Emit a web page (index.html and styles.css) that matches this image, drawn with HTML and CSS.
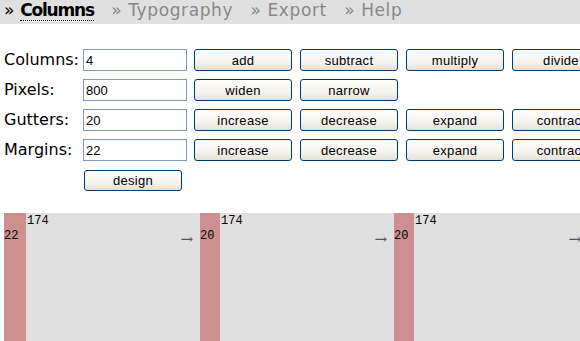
FILE: index.html
```html
<!DOCTYPE html>
<html lang="en">
<head>
  <meta charset="UTF-8">
  <title>Grid Designer</title>
  <link rel="stylesheet" href="styles.css">
</head>
<body>

  <nav class="tabs">
    <a class="tab active">&raquo; <span>Columns</span></a>
    <a class="tab">&raquo; <span>Typography</span></a>
    <a class="tab">&raquo; <span>Export</span></a>
    <a class="tab">&raquo; <span>Help</span></a>
  </nav>

  <!-- ustawienia -->
  <div class="form">
    <label>Columns:</label>
    <input type="text" value="4">
    <button>add</button>
    <button>subtract</button>
    <button>multiply</button>
    <button>divide</button>

    <label>Pixels:</label>
    <input type="text" value="800">
    <button>widen</button>
    <button>narrow</button>
    <span></span>
    <span></span>

    <label>Gutters:</label>
    <input type="text" value="20">
    <button>increase</button>
    <button>decrease</button>
    <button>expand</button>
    <button>contract</button>

    <label>Margins:</label>
    <input type="text" value="22">
    <button>increase</button>
    <button>decrease</button>
    <button>expand</button>
    <button>contract</button>

    <span></span>
    <button class="design">design</button>
  </div>

  <!-- podglad -->
  <div class="preview">
    <div class="gap" style="width: 22px;">22</div>
    <div class="col"><div class="num">174</div><div class="arrow">&rarr;</div></div>
    <div class="gap">20</div>
    <div class="col"><div class="num">174</div><div class="arrow">&rarr;</div></div>
    <div class="gap">20</div>
    <div class="col"><div class="num">174</div><div class="arrow">&rarr;</div></div>
    <div class="gap">20</div>
    <div class="col"><div class="num">174</div><div class="arrow">&rarr;</div></div>
  </div>

</body>
</html>
```

FILE: styles.css
```css
body {
  font-family: "DejaVu Sans", Verdana, sans-serif;
  background: #fff;
  margin: 0;
  padding: 0;
  overflow: hidden;
}
.tabs {
  background: #e0e0e0;
  height: 24px;
  padding-left: 4px;
  font-size: 17px;
  line-height: 20px;
  white-space: nowrap;
}
.tab {
  color: #888;
  margin-right: 12px;
  letter-spacing: 0.6px;
}
.tab.active {
  color: #000;
  letter-spacing: 0.2px;
}
.tab.active span {
  font-weight: bold;
  letter-spacing: -1.2px;
  border-bottom: 1px dotted #000;
}
.form {
  display: grid;
  grid-template-columns: 71px 104px 98px 98px 98px 98px;
  column-gap: 8px;
  row-gap: 8px;
  padding: 25px 0 0 4px;
  white-space: nowrap;
}
.form label {
  font-size: 16px;
  line-height: 22px;
}
.form input {
  box-sizing: border-box;
  width: 104px;
  height: 22px;
  border: 1px solid #7f9db9;
  padding: 1px 2px;
  font-family: "Liberation Sans", Arial, sans-serif;
  font-size: 13px;
}
.form button {
  box-sizing: border-box;
  height: 22px;
  width: 98px;
  margin-left: -1px;
  border: 1px solid #003c74;
  border-radius: 3px;
  background: linear-gradient(#ffffff, #f4f3ee 60%, #e3e1d6);
  font-family: "Liberation Sans", Arial, sans-serif;
  font-size: 13px;
  letter-spacing: 0.3px;
  color: #000;
  padding: 0;
}
.form .design {
  margin-left: 1px;
  margin-top: 1px;
  height: 21px;
}
.preview {
  display: flex;
  margin: 22px 0 0 4px;
  height: 200px;
  font-family: "Liberation Mono", "Courier New", monospace;
  font-size: 12px;
  line-height: 15px;
}
.gap {
  flex: none;
  width: 20px;
  background: #cd8f8f;
  padding-top: 16px;
}
.col {
  flex: none;
  width: 174px;
  background: #e0e0e0;
  padding-top: 1px;
  padding-left: 1px;
  box-sizing: border-box;
}
.arrow {
  text-align: right;
  padding-right: 7px;
  font-family: "DejaVu Serif", serif;
  font-size: 15px;
  color: #555;
  margin-top: 3px;
}
```
